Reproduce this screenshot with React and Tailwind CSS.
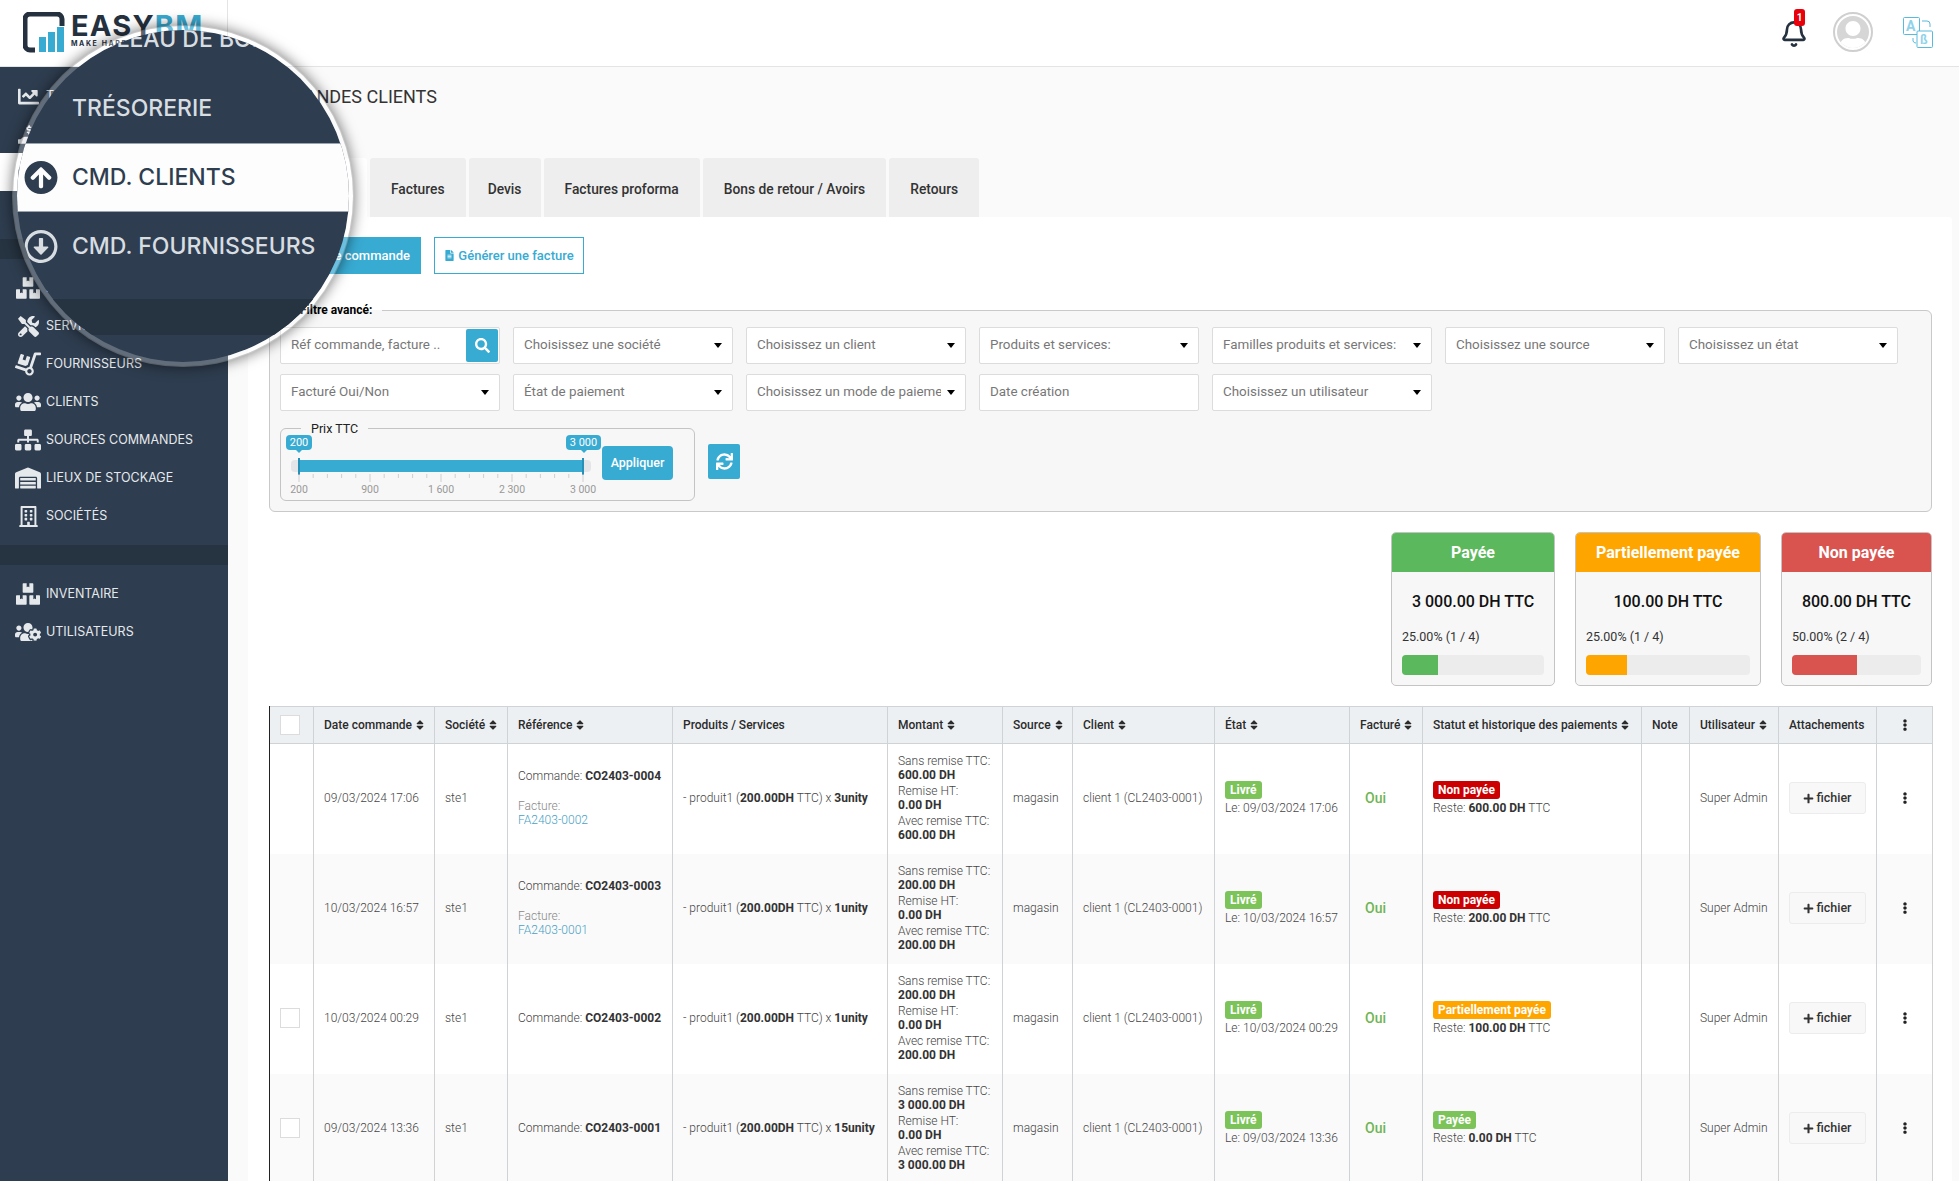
import React from "react";
import {
  FaChartLine, FaHandHoldingUsd, FaArrowCircleUp, FaRegArrowAltCircleDown, FaBoxes, FaTools, FaDolly, FaUsers,
  FaSitemap, FaWarehouse, FaRegBuilding, FaUsersCog, FaSearch, FaSync, FaSort, FaEllipsisV, FaPlus, FaFileAlt, FaUser,
} from "react-icons/fa";
import { Bell } from "lucide-react";

const NavItem = ({ icon: Icon, label, active, size = 21, iconClass = "" }) => (
  <div className={`flex h-[38px] items-center pl-[15px] ${active ? "bg-white text-[#2e3d4f]" : "text-[#e6e9ec]"}`}>
    <span className="flex w-[26px] justify-center"><Icon size={size} className={iconClass} /></span>
    <span className="ml-[5px] whitespace-nowrap text-[12.5px] leading-none">{label}</span>
  </div>
);

const LensItem = ({ icon: Icon, label, active }) => (
  <div className={`flex h-[69px] items-center pl-[7px] ${active ? "border-y border-y-[#9aa4ae] bg-[#fdfdfd] text-[#2e3d4f]" : "text-[#d8dde2]"}`}>
    <span className="flex w-[34px] justify-center">{Icon && <Icon size={35} />}</span>
    <span className="ml-[14px] whitespace-nowrap text-[23px] font-medium leading-none">{label}</span>
  </div>
);

const Field = ({ label, caret = true, children }) => (
  <div className="flex h-[37px] w-[220px] items-center rounded-[2px] border border-[#dcdcdc] bg-white pl-[10px] pr-[10px] text-[13.4px] text-[#777]">
    <span className="flex-1 overflow-hidden whitespace-nowrap">{label}</span>
    {caret && <span className="ml-[6px] h-0 w-0 shrink-0 border-x-[4px] border-t-[5px] border-x-transparent border-t-black" />}
    {children}
  </div>
);

const Stat = ({ title, amount, pct, fill, widthClass, headClass, barClass }) => (
  <div className={`${widthClass} h-[154px] overflow-hidden rounded-[5px] border border-[#c4c4c4] bg-[#f7f7f7]`}>
    <div className={`${headClass} flex h-[39px] items-center justify-center text-[16px] font-bold text-white`}>{title}</div>
    <div className="px-[10px]">
      <div className="mt-[18px] text-center text-[16px] font-medium leading-[24px] text-[#111]">{amount}</div>
      <div className="mt-[15px] text-[12.5px] leading-[16px] text-[#333]">{pct}</div>
      <div className="mt-[10px] h-[20px] overflow-hidden rounded-[4px] bg-[#ececec]">
        <div className={`${barClass} h-full ${fill}`} />
      </div>
    </div>
  </div>
);

const Th = ({ children, sort = true, className = "" }) => (
  <th className={`border-r border-[#d0d3d6] px-[10px] text-left text-[12px] font-medium text-[#2b2b2b] ${className}`}>
    <span className="inline-flex items-center gap-[2px] whitespace-nowrap">
      {children}
      {sort && <FaSort size={12} />}
    </span>
  </th>
);

const Td = ({ children, className = "" }) => (
  <td className={`border-r border-[#d0d3d6] px-[10px] pb-[1px] align-middle text-[12px] font-light leading-[14px] text-[#444] ${className}`}>{children}</td>
);

const Amount = ({ label, value }) => (
  <div className="mb-[2px] last:mb-0">
    <div>{label}</div>
    <div className="font-bold text-[#333]">{value}</div>
  </div>
);

const Badge = ({ cls, children }) => (
  <span className={`inline-block h-[18px] rounded-[3px] px-[5px] text-[12px] font-bold leading-[18px] text-white ${cls}`}>{children}</span>
);

const Tip = ({ className, children }) => (
  <span className={`absolute top-[-1px] flex h-[15px] items-center justify-center rounded-[4px] bg-[#38abd3] text-[11px] leading-none text-white ${className}`}>
    {children}
    <span className="absolute bottom-[-3px] left-1/2 h-0 w-0 -translate-x-1/2 border-x-[3px] border-t-[3px] border-x-transparent border-t-[#38abd3]" />
  </span>
);

const rows = [
  { ref: "CO2403-0004", fact: "FA2403-0002", date: "09/03/2024 17:06", qty: "3unity", amt: "600.00 DH", reste: "600.00 DH", status: "Non payée", cls: "bg-[#cc0000]", check: false },
  { ref: "CO2403-0003", fact: "FA2403-0001", date: "10/03/2024 16:57", qty: "1unity", amt: "200.00 DH", reste: "200.00 DH", status: "Non payée", cls: "bg-[#cc0000]", check: false, alt: true },
  { ref: "CO2403-0002", date: "10/03/2024 00:29", qty: "1unity", amt: "200.00 DH", reste: "100.00 DH", status: "Partiellement payée", cls: "bg-[#ffa500]", check: true },
  { ref: "CO2403-0001", date: "09/03/2024 13:36", qty: "15unity", amt: "3 000.00 DH", reste: "0.00 DH", status: "Payée", cls: "bg-[#7cc35a]", check: true, alt: true },
];

const tabs = [
  { t: "Factures", cls: "px-[21px]" },
  { t: "Devis", cls: "w-[72px] justify-center" },
  { t: "Factures proforma", cls: "px-[21px]" },
  { t: "Bons de retour / Avoirs", cls: "px-[21px]" },
  { t: "Retours", cls: "px-[21px]" },
];

const ticks = [];
for (let i = 0; i <= 20; i++) ticks.push(i);

export default function App() {
  return (
    <div className="relative flex h-[1181px] w-[1959px] flex-col overflow-hidden bg-white font-['Roboto',sans-serif]">
      {/* Header */}
      <header className="flex h-[67px] shrink-0 border-b border-[#e4e4e4] bg-white">
        <div className="flex h-full w-[228px] shrink-0 items-start border-r border-[#e4e4e4] pl-[23px] pt-[12px]">
          <svg width="42" height="42" viewBox="0 0 42 42">
            <path d="M12 38H7a5 5 0 0 1-5-5V7a5 5 0 0 1 5-5h27a5 5 0 0 1 5 5v7" fill="none" stroke="#25313f" strokeWidth="5" />
            <rect x="16" y="25" width="7" height="15" fill="#38abd3" />
            <rect x="25" y="20" width="7" height="20" fill="#38abd3" />
            <rect x="34" y="15" width="7" height="25" fill="#38abd3" />
          </svg>
          <div className="ml-[6px] font-['Inter',sans-serif]">
            <div className="mt-[-1px] whitespace-nowrap text-[29px] font-bold leading-[29px] tracking-[1.2px] text-[#25313f]">EASY<span className="text-[#38abd3]">BM</span></div>
            <div className="whitespace-nowrap text-[7px] font-bold leading-[8px] tracking-[1.6px] text-[#25313f]">MAKE HAPPEN</div>
          </div>
        </div>
        <div className="flex flex-1 items-start justify-end">
          <div className="relative mr-[25px] mt-[20px] text-[#25313f]">
            <Bell size={28} strokeWidth={2.25} />
            <span className="absolute left-[14px] top-[-11px] flex h-[17px] w-[11px] items-center justify-center rounded-[3px] bg-[#e8000b] text-[10px] font-bold leading-none text-white">1</span>
          </div>
          <div className="mr-[30px] mt-[12px] flex h-[40px] w-[40px] items-end justify-center overflow-hidden rounded-full border-[2px] border-[#cfcfcf] bg-white p-[2px]">
            <div className="flex h-full w-full items-end justify-center overflow-hidden rounded-full bg-[#d6d6d6] text-white"><FaUser size={30} className="translate-y-[3px]" /></div>
          </div>
          <svg className="mr-[26px] mt-[17px]" width="30" height="31" viewBox="0 0 30 31" fill="none" stroke="#58bbdd" strokeWidth="1">
            <rect x="0.5" y="0.5" width="16" height="17" rx="1" />
            <rect x="14" y="14" width="15.5" height="16.5" rx="1" fill="#fff" />
            <text x="3" y="14" fontSize="14" fontWeight="700" fill="#8ed3ea" stroke="none">A</text>
            <text x="17" y="27" fontSize="12" fontWeight="700" fill="#8ed3ea" stroke="none">ß</text>
            <path d="M19 4h5a3 3 0 0 1 3 3v3M10 21v3a3 3 0 0 0 3 2" />
          </svg>
        </div>
      </header>

      <div className="flex min-h-0 flex-1">
        {/* Sidebar */}
        <aside className="w-[228px] shrink-0 bg-[#2e3d4f] pt-[10px] font-['Inter',sans-serif]">
          <NavItem icon={FaChartLine} label="TABLEAU DE BORD" />
          <NavItem icon={FaHandHoldingUsd} label="TRÉSORERIE" />
          <NavItem icon={FaArrowCircleUp} label="CMD. CLIENTS" active />
          <NavItem icon={FaRegArrowAltCircleDown} label="CMD. FOURNISSEURS" />
          <div className="mt-[10px] h-[20px] bg-[#263340]" />
          <div className="mt-[10px]">
            <NavItem icon={FaBoxes} label="PRODUITS" size={24} />
            <NavItem icon={FaTools} label="SERVICES" size={21} />
            <NavItem icon={FaDolly} label="FOURNISSEURS" size={26} iconClass="-scale-x-100" />
            <NavItem icon={FaUsers} label="CLIENTS" size={26} />
            <NavItem icon={FaSitemap} label="SOURCES COMMANDES" size={26} />
            <NavItem icon={FaWarehouse} label="LIEUX DE STOCKAGE" size={26} />
            <NavItem icon={FaRegBuilding} label="SOCIÉTÉS" size={21} />
          </div>
          <div className="mt-[10px] h-[20px] bg-[#263340]" />
          <div className="mt-[10px]">
            <NavItem icon={FaBoxes} label="INVENTAIRE" size={24} />
            <NavItem icon={FaUsersCog} label="UTILISATEURS" size={26} />
          </div>
        </aside>

        {/* Main */}
        <main className="min-w-0 flex-1 bg-[#fafafa] pl-[20px] pr-[7px]">
          <h1 className="mt-[18px] h-[24px] pl-[1px] text-[18px] font-normal leading-[24px] text-[#333]">COMMANDES CLIENTS</h1>
          <nav className="mt-[49px] flex h-[59px] gap-[3px] text-[13.8px] font-medium text-[#333]">
            <div className="flex w-[119px] items-center justify-center rounded-t-[3px] bg-white pt-[3px]">Commandes</div>
            {tabs.map(({ t, cls }) => (
              <div key={t} className={`flex items-center rounded-t-[3px] bg-[#eeeeee] pt-[3px] ${cls}`}>{t}</div>
            ))}
          </nav>

          <section className="rounded-[3px] bg-white pl-[21px] pr-[20px] pt-[20px]">
            <div className="flex gap-[13px] text-[13px] font-medium">
              <button className="flex h-[37px] w-[152px] items-center justify-end bg-[#38abd3] pr-[11px] text-white">Nouvelle commande</button>
              <button className="flex h-[37px] w-[150px] items-center justify-center gap-[3px] border-[1.5px] border-[#38abd3] text-[#38abd3]"><FaFileAlt size={11} />Générer une facture</button>
            </div>

            <fieldset className="mt-[29px] rounded-[6px] border border-[#c9c9c9] bg-[#f7f7f7] pb-[10px] pl-[10px]">
              <legend className="ml-[10px] h-[15px] px-[10px] text-[12px] font-bold leading-[15px] text-black">Filtre avancé:</legend>
              <div className="mt-[9px] flex flex-wrap gap-x-[13px] gap-y-[10px]">
                <div className="relative flex h-[37px] w-[220px] items-center rounded-[2px] border border-[#dcdcdc] bg-white pl-[10px] text-[13.4px] text-[#777]">
                  <span className="whitespace-nowrap">Réf commande, facture ..</span>
                  <span className="absolute right-[1px] top-[1px] flex h-[33px] w-[32px] items-center justify-center rounded-[2px] bg-[#38abd3] text-white"><FaSearch size={15} /></span>
                </div>
                <Field label="Choisissez une société" />
                <Field label="Choisissez un client" />
                <Field label="Produits et services:" />
                <Field label="Familles produits et services:" />
                <Field label="Choisissez une source" />
                <Field label="Choisissez un état" />
                <Field label="Facturé Oui/Non" />
                <Field label="État de paiement" />
                <Field label="Choisissez un mode de paiement" />
                <Field label="Date création" caret={false} />
                <Field label="Choisissez un utilisateur" />
              </div>

              <div className="mt-[10px] flex items-start">
                <fieldset className="h-[80px] w-[415px] rounded-[6px] border border-[#c4c4c4]">
                  <legend className="ml-[20px] h-[15px] px-[10px] text-[12.5px] leading-[15px] text-[#222]">Prix TTC</legend>
                  <div className="flex">
                    <div className="relative h-[64px] w-[321px] shrink-0">
                      <Tip className="left-[5px] w-[26px]">200</Tip>
                      <Tip className="left-[285px] w-[35px]">3 000</Tip>
                      <div className="absolute left-[10px] top-[24px] h-[12px] w-[300px] rounded-[4px] bg-[#e3e5e8]" />
                      <div className="absolute left-[17px] top-[24px] h-[12px] w-[286px] bg-[#38abd3]" />
                      <div className="absolute left-[17px] top-[22px] h-[17px] w-[2px] bg-[#2690b8]" />
                      <div className="absolute left-[301px] top-[22px] h-[17px] w-[2px] bg-[#2690b8]" />
                      <svg className="absolute left-0 top-[38px]" width="320" height="9">
                        {ticks.map((i) => (
                          <line key={i} x1={18 + i * 14.2} x2={18 + i * 14.2} y1="0" y2={i % 5 === 0 ? 8 : 4} stroke="#cfcfcf" />
                        ))}
                      </svg>
                      {[["200", 18], ["900", 89], ["1 600", 160], ["2 300", 231], ["3 000", 302]].map(([t, x]) => (
                        <span key={t} style={{ left: x }} className="absolute top-[47px] -translate-x-1/2 whitespace-nowrap text-[10.5px] leading-[13px] text-[#999]">{t}</span>
                      ))}
                    </div>
                    <button className="mt-[10px] h-[34px] w-[71px] rounded-[4px] bg-[#38abd3] text-[12.5px] font-medium text-white">Appliquer</button>
                  </div>
                </fieldset>
                <button className="ml-[13px] mt-[23px] flex h-[35px] w-[32px] items-center justify-center rounded-[2px] bg-[#38abd3] text-white"><FaSync size={17} /></button>
              </div>
            </fieldset>

            <div className="mt-[20px] flex justify-end gap-[20px]">
              <Stat title="Payée" amount="3 000.00 DH TTC" pct="25.00% (1 / 4)" widthClass="w-[164px]" headClass="bg-[#5cb85c]" barClass="bg-[#5cb85c]" fill="w-1/4" />
              <Stat title="Partiellement payée" amount="100.00 DH TTC" pct="25.00% (1 / 4)" widthClass="w-[186px]" headClass="bg-[#ffa500]" barClass="bg-[#ffa500]" fill="w-1/4" />
              <Stat title="Non payée" amount="800.00 DH TTC" pct="50.00% (2 / 4)" widthClass="w-[151px]" headClass="bg-[#d9534f]" barClass="bg-[#d9534f]" fill="w-1/2" />
            </div>

            <table className="mt-[20px] w-[1663px] table-fixed border-collapse">
              <colgroup>
                <col className="w-[44px]" /><col className="w-[121px]" /><col className="w-[73px]" /><col className="w-[165px]" />
                <col className="w-[215px]" /><col className="w-[115px]" /><col className="w-[70px]" /><col className="w-[142px]" />
                <col className="w-[135px]" /><col className="w-[73px]" /><col className="w-[219px]" /><col className="w-[48px]" />
                <col className="w-[89px]" /><col className="w-[98px]" /><col className="w-[56px]" />
              </colgroup>
              <thead>
                <tr className="h-[37px] border-y border-[#d0d3d6] bg-[#edf0f3]">
                  <th className="border-l-[1.5px] border-r border-l-[#222] border-r-[#d0d3d6] pl-[10px] text-left">
                    <span className="block h-[20px] w-[20px] border border-[#dcdcdc] bg-white" />
                  </th>
                  <Th>Date commande</Th><Th>Société</Th><Th>Référence</Th><Th sort={false}>Produits / Services</Th>
                  <Th>Montant</Th><Th>Source</Th><Th>Client</Th><Th>État</Th><Th>Facturé</Th>
                  <Th>Statut et historique des paiements</Th><Th sort={false}>Note</Th><Th>Utilisateur</Th><Th sort={false}>Attachements</Th>
                  <th className="border-r border-[#d0d3d6]"><FaEllipsisV size={12} className="mx-auto text-[#222]" /></th>
                </tr>
              </thead>
              <tbody>
                {rows.map((r) => (
                  <tr key={r.ref} className={`h-[110px] ${r.alt ? "bg-[#fafafa]" : "bg-white"}`}>
                    <td className="border-l-[1.5px] border-r border-l-[#222] border-r-[#d0d3d6] pb-[1px] pl-[10px]">
                      {r.check && <span className="block h-[20px] w-[20px] border border-[#dcdcdc] bg-white" />}
                    </td>
                    <Td>{r.date}</Td>
                    <Td>ste1</Td>
                    <Td>
                      <div>Commande: <b className="font-bold text-[#333]">{r.ref}</b></div>
                      {r.fact && (
                        <div className="mt-[16px] text-[#888]">Facture:<br /><span className="text-[#4a9fc4]">{r.fact}</span></div>
                      )}
                    </Td>
                    <Td><span className="whitespace-nowrap">- produit1 (<b className="font-bold text-[#333]">200.00DH</b> TTC) x <b className="font-bold text-[#333]">{r.qty}</b></span></Td>
                    <Td>
                      <Amount label="Sans remise TTC:" value={r.amt} />
                      <Amount label="Remise HT:" value="0.00 DH" />
                      <Amount label="Avec remise TTC:" value={r.amt} />
                    </Td>
                    <Td>magasin</Td>
                    <Td><span className="whitespace-nowrap">client 1 (CL2403-0001)</span></Td>
                    <Td>
                      <Badge cls="bg-[#7cc35a]">Livré</Badge>
                      <div className="mt-[2px] whitespace-nowrap">Le: {r.date}</div>
                    </Td>
                    <Td className="pl-[15px]"><span className="text-[14px] font-medium text-[#6fb552]">Oui</span></Td>
                    <Td>
                      <Badge cls={r.cls}>{r.status}</Badge>
                      <div className="mt-[2px] whitespace-nowrap">Reste: <b className="font-bold text-[#333]">{r.reste}</b> TTC</div>
                    </Td>
                    <Td />
                    <Td><span className="whitespace-nowrap">Super Admin</span></Td>
                    <Td>
                      <button className="flex h-[32px] w-[77px] items-center justify-center gap-[2px] rounded-[3px] border border-[#ececec] bg-[#f8f8f8] text-[12.5px] font-medium text-[#333]">
                        <FaPlus size={11} />fichier
                      </button>
                    </Td>
                    <td className="border-r border-[#d0d3d6] pb-[1px]"><FaEllipsisV size={12} className="mx-auto text-[#222]" /></td>
                  </tr>
                ))}
              </tbody>
            </table>
          </section>
        </main>
      </div>

      {/* Magnifier overlay */}
      <div className="absolute left-[12px] top-[25px] h-[342px] w-[342px] overflow-hidden rounded-full border-[5px] border-white/25 bg-[#2e3d4f] bg-clip-padding font-['Inter',sans-serif] shadow-[0_0_14px_rgba(0,0,0,0.55)]">
        <div className="-mt-[25px]">
          <LensItem label="TABLEAU DE BORD" />
          <LensItem label="TRÉSORERIE" />
          <LensItem icon={FaArrowCircleUp} label="CMD. CLIENTS" active />
          <LensItem icon={FaRegArrowAltCircleDown} label="CMD. FOURNISSEURS" />
          <div className="mt-[18px] h-[36px] bg-[#263340]" />
        </div>
      </div>
    </div>
  );
}
